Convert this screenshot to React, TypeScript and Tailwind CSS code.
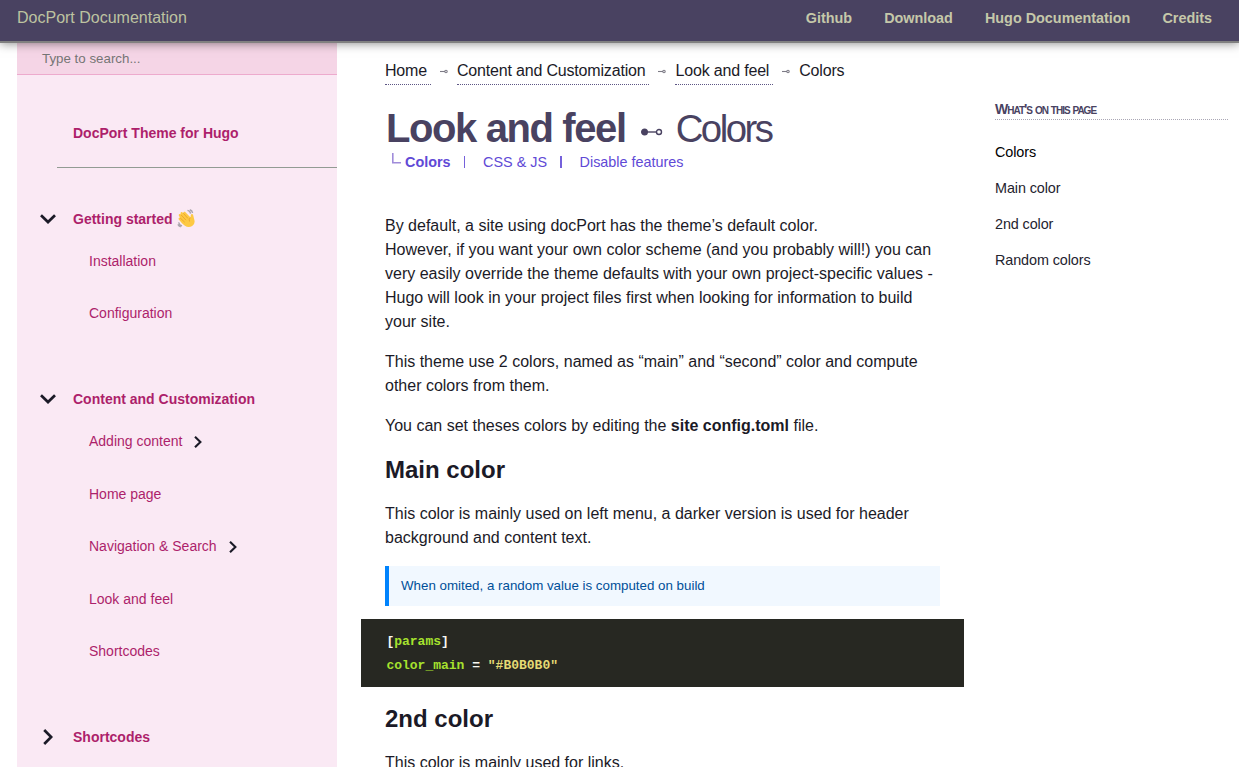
import React from "react";

const sans = "font-['Liberation_Sans',Arial,sans-serif]";

function Chevron({ down = false, small = false }: { down?: boolean; small?: boolean }) {
  if (down) {
    return (
      <svg width="16" height="10" viewBox="0 0 16 10" fill="none" stroke="#1b1a27" strokeWidth="2.7">
        <path d="M1 1.2 8 8 15 1.2" />
      </svg>
    );
  }
  return small ? (
    <svg width="8" height="12" viewBox="0 0 8 12" fill="none" stroke="#1b1a27" strokeWidth="2.1">
      <path d="M1 .8 6.4 6 1 11.2" />
    </svg>
  ) : (
    <svg width="10" height="16" viewBox="0 0 10 16" fill="none" stroke="#1b1a27" strokeWidth="2.7">
      <path d="M1.2 1 8.2 8 1.2 15" />
    </svg>
  );
}

function Wave() {
  return (
    <svg width="19" height="19" viewBox="0 0 19 19" className="mb-[2px] ml-1" role="img" aria-label="Waving hand">
      <path d="M10.5 1.4Q13 1.8 13.6 4.6M12.8.7Q15.2 1.3 15.6 4M1.6 13.4Q2.2 16 5 17M.9 15.4Q1.8 17.3 3.8 17.9" fill="none" stroke="#aaa5ad" strokeWidth="1.4" />
      <path d="M5.2 14.6 1.8 10.4Q1.2 9 2.4 8.6L3.2 8.9 1.8 6.6Q1.5 5.2 2.8 5L3.8 5.5 3.5 4.3Q3.6 2.9 4.9 3.1L6.2 4Q6.5 2.2 8 2.8L13.5 8.6 13.8 6Q14.5 4.4 16 5.4L17.3 10.8Q18.5 14.8 15.2 17 11.4 19.2 7.9 16.7Z" fill="#fdc943" />
      <path d="M4 5.8 9 11.2M3.2 9 7.7 13.2M6.3 4.2 10.9 9.4M13.4 8.6Q11.5 10 12.5 12.5" fill="none" stroke="#e69a25" strokeWidth=".7" />
    </svg>
  );
}

function Section({ title, open = true, wave = false, children }: { title: string; open?: boolean; wave?: boolean; children?: React.ReactNode }) {
  return (
    <section className="mb-[66px]">
      <div className="flex h-5 items-center text-[14px] font-bold">
        <span className="-mt-px ml-[23px] flex w-[33px] shrink-0 items-center">
          <span className={open ? "" : "ml-[3px]"}><Chevron down={open} /></span>
        </span>
        <span>{title}</span>
        {wave && <Wave />}
      </div>
      {children && <ul className="mt-[22px] flex flex-col gap-[32.6px] pl-[72px] text-[14px]">{children}</ul>}
    </section>
  );
}

function Item({ label, more = false }: { label: string; more?: boolean }) {
  return (
    <li className="flex h-5 items-center">
      <span>{label}</span>
      {more && <span className="ml-3"><Chevron small /></span>}
    </li>
  );
}

function Crumb({ label }: { label: string }) {
  return (
    <>
      <a className="h-[26px] border-b border-dotted border-[#5d5684] pr-1 leading-6 tracking-[-0.18px]">{label}</a>
      <svg width="8" height="5" viewBox="0 0 8 5" className="mt-[10px] mr-[9px] ml-[9px] shrink-0" fill="none" stroke="#7d7b86" strokeWidth="1.1">
        <path d="M0 2.5H5" />
        <circle cx="6" cy="2.5" r="1.2" />
      </svg>
    </>
  );
}

export default function App() {
  return (
    <div className={`flex h-[767px] w-[1239px] flex-col overflow-hidden bg-white text-[#1b1a27] ${sans}`}>
      <header className="relative z-10 flex h-[43px] shrink-0 justify-between border-b-2 border-[#808080] bg-[#494261] pr-[27px] pl-[17px] text-[#bdc3a0] shadow-[0_0_10px_rgba(0,0,0,0.5)]">
        <span className="pt-[6px] text-base leading-6">DocPort Documentation</span>
        <nav className="flex gap-8 pt-[6px] text-[14.4px] leading-6 font-bold text-[#c5c8a9]">
          <a>Github</a>
          <a>Download</a>
          <a>Hugo Documentation</a>
          <a>Credits</a>
        </nav>
      </header>

      <div className="flex min-h-0 flex-1">
        <aside className="ml-[17px] w-[320px] shrink-0 overflow-hidden bg-[#fae9f4] text-[#ad1f6b]">
          <div className="flex h-8 items-center border-b border-[#edaacd] bg-[#f5d5e6] pl-[25px] text-[13.33px] text-[#757575]">Type to search...</div>
          <h2 className="mt-12 ml-14 h-5 text-[14px] leading-5 font-bold">DocPort Theme for Hugo</h2>
          <div className="mt-6 mb-[41px] ml-10 h-px bg-[#929b93]" />
          <Section title="Getting started" wave>
            <Item label="Installation" />
            <Item label="Configuration" />
          </Section>
          <Section title="Content and Customization">
            <Item label="Adding content" more />
            <Item label="Home page" />
            <Item label="Navigation & Search" more />
            <Item label="Look and feel" />
            <Item label="Shortcodes" />
          </Section>
          <Section title="Shortcodes" open={false} />
        </aside>

        <main className="w-[627px] shrink-0 pt-4 pl-12">
          <nav className="flex h-[27px] items-start whitespace-nowrap leading-6">
            <Crumb label="Home" />
            <Crumb label="Content and Customization" />
            <Crumb label="Look and feel" />
            <span className="tracking-[-0.17px]">Colors</span>
          </nav>
          <h1 className="mt-[19px] flex h-12 items-center text-[40px] leading-[48px] whitespace-nowrap text-[#494261]">
            <span className="-mt-[2px] ml-px font-bold tracking-[-1.4px]">Look and feel</span>
            <svg width="22" height="8" viewBox="0 0 22 8" className="mt-[5px] mr-[13px] ml-[15px]" fill="none" stroke="#494261" strokeWidth="1.4">
              <circle cx="3.5" cy="4" r="2.8" fill="#494261" />
              <path d="M6 4H15.5" />
              <circle cx="18" cy="4" r="2.5" />
            </svg>
            <span className="text-[38.4px] tracking-[-2.5px]">Colors</span>
          </h1>
          <nav className="flex h-5 items-center text-[14.4px] whitespace-nowrap text-[#6049d6]">
            <svg width="9" height="11" viewBox="0 0 9 11" className="mr-1 mb-[10px] ml-[7px]" fill="none" stroke="#a08cda" strokeWidth="1.6">
              <path d="M.8 0V9.8H9" />
            </svg>
            <b>Colors</b>
            <span className="mr-[18px] mb-[2px] ml-[13px] h-3 w-[1.5px] bg-[#7561db]" />
            <span>CSS &amp; JS</span>
            <span className="mr-[18px] mb-[2px] ml-[13px] h-3 w-[1.5px] bg-[#7561db]" />
            <span>Disable features</span>
          </nav>
          <article className="mt-[41px] text-base leading-6 whitespace-nowrap">
            <p>By default, a site using docPort has the theme’s default color.<br />However, if you want your own color scheme (and you probably will!) you can<br />very easily override the theme defaults with your own project-specific values -<br />Hugo will look in your project files first when looking for information to build<br />your site.</p>
            <p className="mt-4">This theme use 2 colors, named as “main” and “second” color and compute<br />other colors from them.</p>
            <p className="mt-4">You can set theses colors by editing the <b>site config.toml</b> file.</p>
            <h2 className="mt-[14px] text-2xl leading-[36px] font-bold">Main color</h2>
            <p className="mt-[14px]">This color is mainly used on left menu, a darker version is used for header<br />background and content text.</p>
            <div className="mt-4 flex h-10 w-[555px] items-center border-l-4 border-[#0083fd] bg-[#f1f8ff] pl-3 text-[13.33px] text-[#004f99]">When omited, a random value is computed on build</div>
            <pre className="mt-[13px] -ml-6 h-[68px] w-[603px] bg-[#272822] pt-[11px] pl-[25.4px] font-['Liberation_Mono','Courier_New',monospace] text-[13px] leading-6 font-bold text-[#f8f8f2]"><code className="font-[inherit]">[<span className="text-[#a6e22e]">params</span>]{"\n"}<span className="text-[#a6e22e]">color_main</span> = <span className="text-[#e6db74]">"#B0B0B0"</span></code></pre>
            <h2 className="mt-[14px] text-2xl leading-[36px] font-bold">2nd color</h2>
            <p className="mt-[14px]">This color is mainly used for links.</p>
          </article>
        </main>

        <aside className="ml-[31px] w-[233px] shrink-0 pt-[57px]">
          <h3 className="h-5 border-b border-dotted border-[#aaa7b5] text-[14px] leading-[19px] font-bold tracking-[-1px] text-[#494261] [font-variant:small-caps]">What's on this page</h3>
          <ul className="mt-5 text-[14.4px] leading-6 tracking-[-0.1px] text-[#24232e]">
            <li className="mb-3 text-black">Colors</li>
            <li className="mb-3">Main color</li>
            <li className="mb-3">2nd color</li>
            <li>Random colors</li>
          </ul>
        </aside>
      </div>
    </div>
  );
}
